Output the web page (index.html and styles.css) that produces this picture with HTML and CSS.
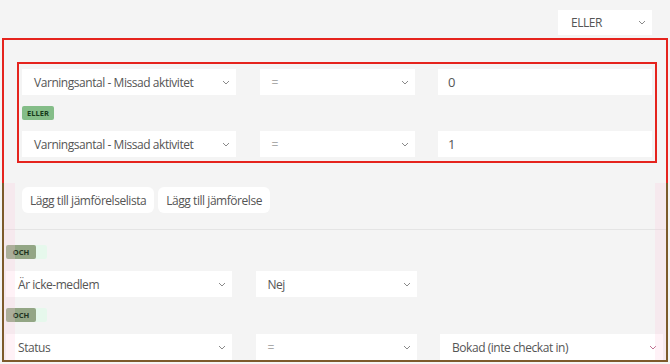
FILE: index.html
```html
<!DOCTYPE html>
<html lang="sv">
<head>
    <meta charset="UTF-8">
    <title>Villkor</title>
    <link rel="stylesheet" href="styles.css">
</head>
<body>
    <div class="topp">
        <div class="val val-lage">
            <span>ELLER</span>
            <svg class="pil" viewBox="0 0 8 5"><path d="M1 1l3 3 3-3"/></svg>
        </div>
    </div>

    <div class="grupp">
        <!-- Jämförelselista (markerad) -->
        <div class="grupp-huvud">
            <div class="lista">
                <div class="rad">
                    <div class="val"><span>Varningsantal - Missad aktivitet</span><svg class="pil" viewBox="0 0 8 5"><path d="M1 1l3 3 3-3"/></svg></div>
                    <div class="val"><span class="ljus">=</span><svg class="pil" viewBox="0 0 8 5"><path d="M1 1l3 3 3-3"/></svg></div>
                    <div class="falt">0</div>
                </div>
                <span class="etikett">ELLER</span>
                <div class="rad">
                    <div class="val"><span>Varningsantal - Missad aktivitet</span><svg class="pil" viewBox="0 0 8 5"><path d="M1 1l3 3 3-3"/></svg></div>
                    <div class="val"><span class="ljus">=</span><svg class="pil" viewBox="0 0 8 5"><path d="M1 1l3 3 3-3"/></svg></div>
                    <div class="falt">1</div>
                </div>
            </div>
        </div>

        <div class="grupp-kropp">
            <div class="knappar">
                <button class="knapp">Lägg till jämförelselista</button>
                <button class="knapp">Lägg till jämförelse</button>
            </div>
            <hr class="linje">
            <div class="villkor">
                <span class="etikett etikett-och">OCH</span>
                <div class="rad rad-bred">
                    <div class="val"><span>Är icke-medlem</span><svg class="pil" viewBox="0 0 8 5"><path d="M1 1l3 3 3-3"/></svg></div>
                    <div class="val"><span>Nej</span><svg class="pil" viewBox="0 0 8 5"><path d="M1 1l3 3 3-3"/></svg></div>
                </div>
                <span class="etikett etikett-och">OCH</span>
                <div class="rad rad-bred">
                    <div class="val"><span>Status</span><svg class="pil" viewBox="0 0 8 5"><path d="M1 1l3 3 3-3"/></svg></div>
                    <div class="val"><span class="ljus">=</span><svg class="pil" viewBox="0 0 8 5"><path d="M1 1l3 3 3-3"/></svg></div>
                    <div class="val"><span>Bokad (inte checkat in)</span><svg class="pil pil-rosa" viewBox="0 0 8 5"><path d="M1 1l3 3 3-3"/></svg></div>
                </div>
            </div>
        </div>
    </div>
</body>
</html>
```

FILE: styles.css
```css
* {
    margin: 0;
    padding: 0;
    box-sizing: border-box;
}

:root {
    --fondo: #f4f4f4;
    --vit: #fff;
    --text: #555;
    --rod: #e5231d;
    --brun: #7d5a2b;
    --gron: #84bd88;
    --olivgron: #93a685;
    --rosa: rgba(255, 200, 222, 0.24);
}

body {
    background: var(--fondo);
    font-family: "Open Sans", "Noto Sans", sans-serif;
    font-size: 12px;
    letter-spacing: -0.45px;
    color: var(--text);
}

.topp {
    height: 38px;
    padding: 10px 18px 0 0;
    display: flex;
    justify-content: flex-end;
}

/* Rullgardinslistor */
.val {
    height: 26px;
    background: var(--vit);
    display: flex;
    align-items: center;
    justify-content: space-between;
    padding: 0 6px 0 12px;
    white-space: nowrap;
}

.val-lage {
    width: 94px;
    height: 25px;
    padding-left: 13px;
}

.ljus {
    color: #aaa;
}

.pil {
    width: 8px;
    height: 5px;
    fill: none;
    stroke: #8a8a8a;
    stroke-width: 1;
}

.pil-rosa {
    stroke: #c07090;
}

.falt {
    height: 26px;
    background: var(--vit);
    display: flex;
    align-items: center;
    padding-left: 10px;
    font-size: 13px;
}

.grupp {
    margin: 0 2px;
}

.grupp-huvud {
    border: 2px solid var(--rod);
    border-bottom: none;
    padding: 22px 9px 20px 13px;
}

.lista {
    border: 2px solid var(--rod);
    padding: 5px 3px 4px 3px;
}

.rad {
    display: grid;
    grid-template-columns: 214px 155px 214px;
    justify-content: space-between;
}

.rad-bred {
    grid-template-columns: 226px 161px 223px;
    column-gap: 23.5px;
    justify-content: start;
}

.etikett {
    display: inline-block;
    margin: 11px 0;
    padding: 0 5px;
    height: 14px;
    line-height: 14px;
    background: var(--gron);
    color: #173a1a;
    font-size: 7.5px;
    letter-spacing: 0;
    font-weight: 700;
    border-radius: 2px;
}

.etikett-och {
    margin: 0 0 12px 0;
    width: 30px;
    text-align: center;
    padding: 0;
    background: var(--olivgron);
    color: #1f3320;
    box-shadow: 11px 0 0 0 #e6f8ec;
}

.grupp-kropp {
    position: relative;
    border: 2px solid var(--brun);
    border-top: none;
    padding: 4px 3px 0 2px;
}

/* Rosa markering av utfyllnad */
.grupp-kropp::before,
.grupp-kropp::after {
    content: "";
    position: absolute;
    top: 0;
    bottom: 0;
    width: 11px;
    background: var(--rosa);
    pointer-events: none;
}

.grupp-kropp::before {
    left: 0;
}

.grupp-kropp::after {
    right: 0;
}

.knappar {
    display: flex;
    gap: 4px;
    padding-left: 16px;
}

.knapp {
    height: 26px;
    padding: 0 8px;
    background: var(--vit);
    border: none;
    border-radius: 6px;
    font-family: inherit;
    font-size: 12px;
    letter-spacing: inherit;
    color: var(--text);
}

.linje {
    border: none;
    border-top: 1px solid #e4e4e4;
    margin: 16px -3px 15px -2px;
}

.villkor {
    display: flex;
    flex-direction: column;
    align-items: flex-start;
}

.villkor .rad {
    margin-bottom: 11px;
}

.villkor .rad:last-child {
    margin-bottom: 0;
}
```
